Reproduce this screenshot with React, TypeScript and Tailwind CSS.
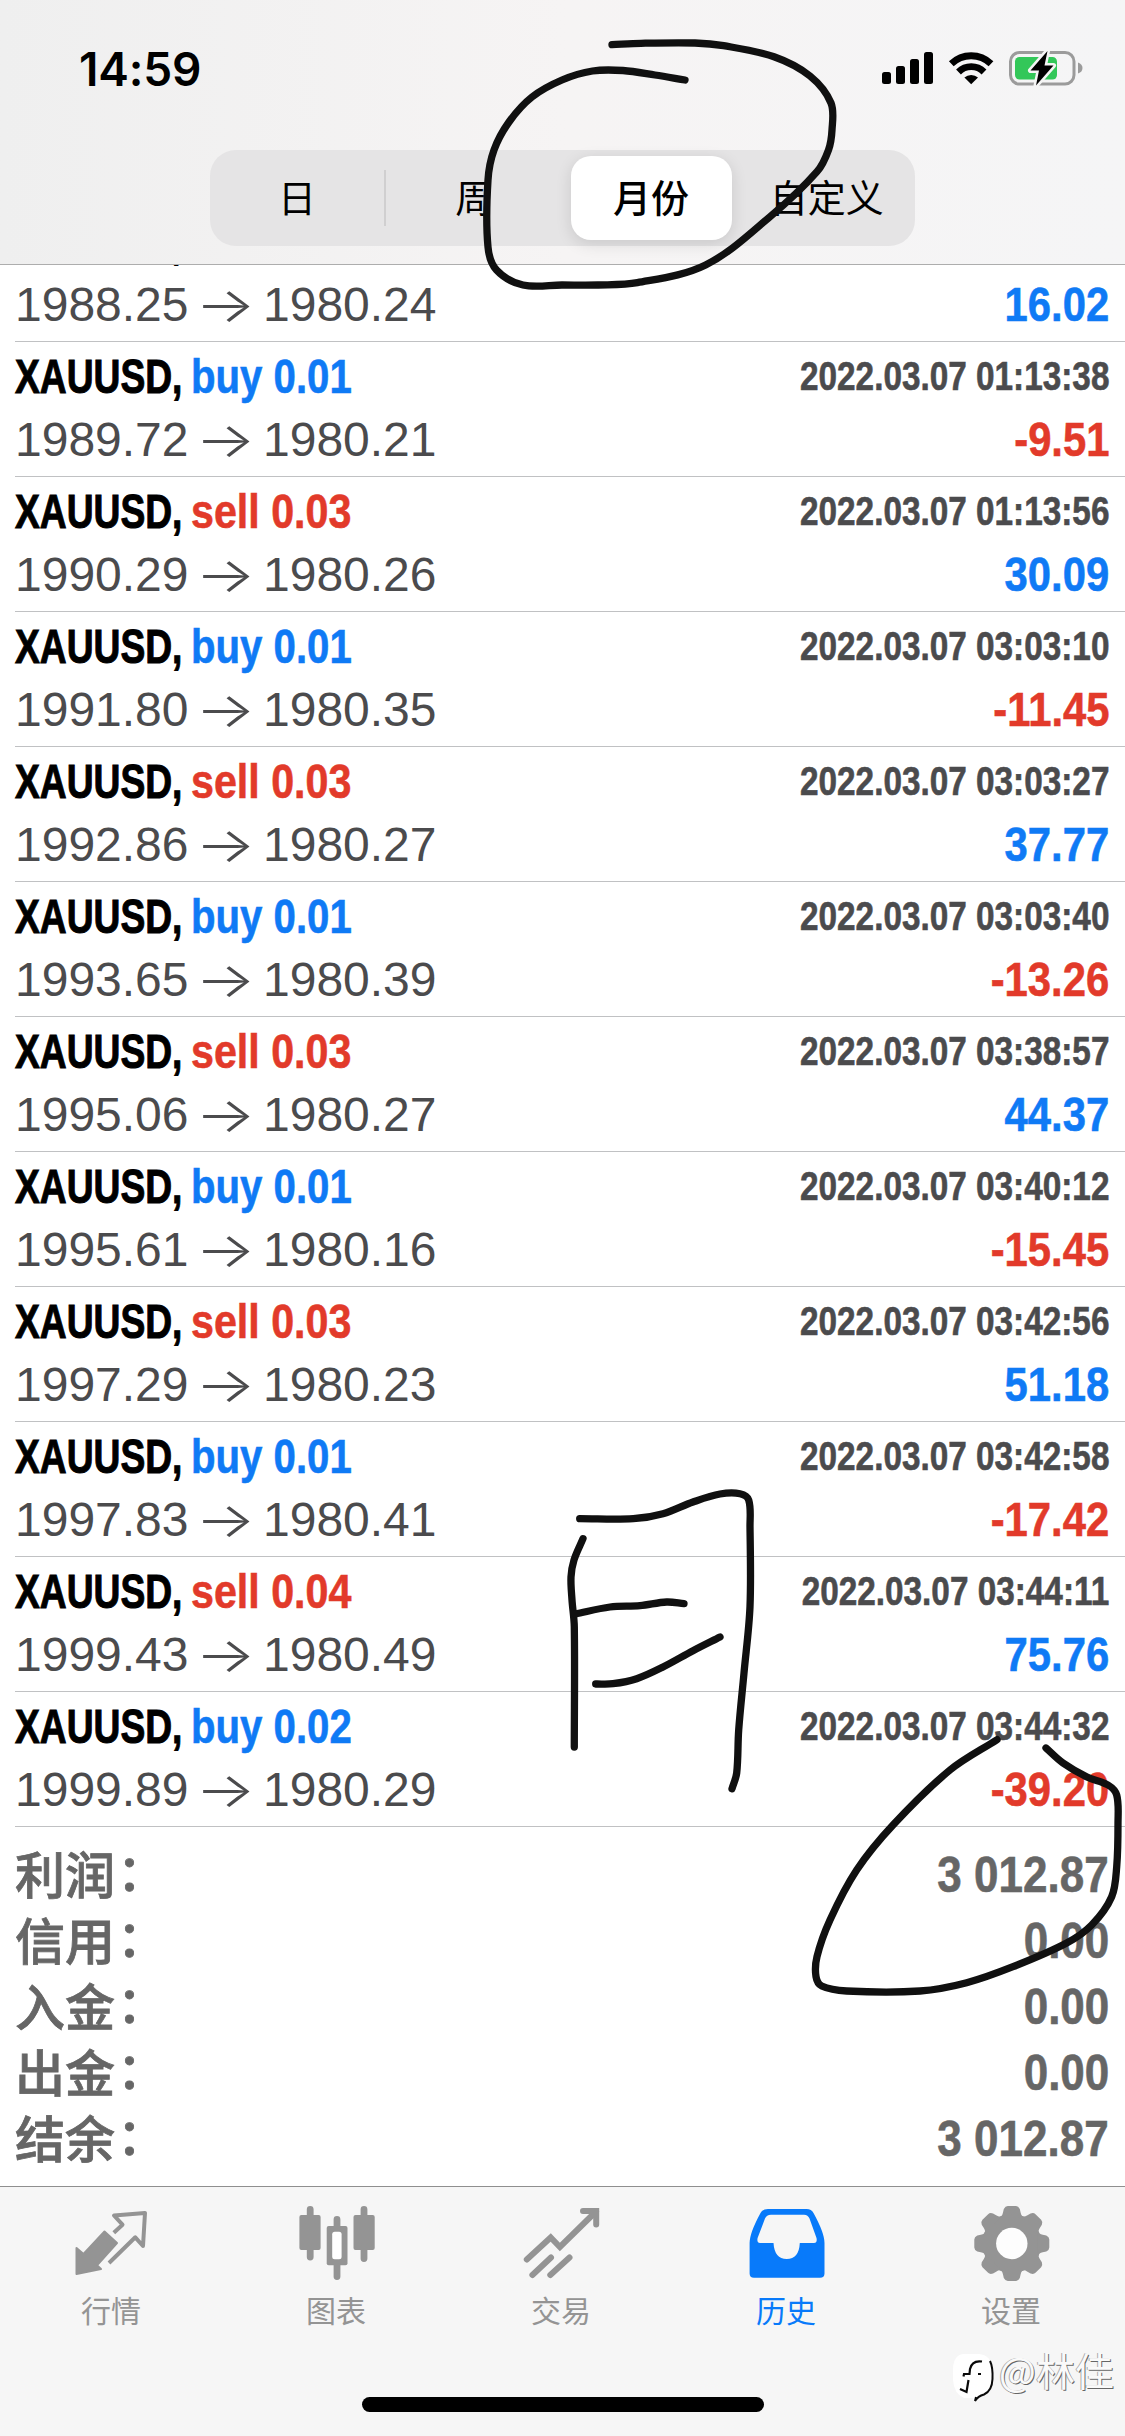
import React from 'react';

type Side = 'buy' | 'sell';
type Point = [number, number];

interface Deal {
  side: Side;
  volume: string;
  open: string;
  close: string;
  time: string;
  profit: string;
}

const deals: Deal[] = [
  { side: 'sell', volume: '0.03', open: '1988.25', close: '1980.24', time: '2022.03.07 01:13:24', profit: '16.02' },
  { side: 'buy', volume: '0.01', open: '1989.72', close: '1980.21', time: '2022.03.07 01:13:38', profit: '-9.51' },
  { side: 'sell', volume: '0.03', open: '1990.29', close: '1980.26', time: '2022.03.07 01:13:56', profit: '30.09' },
  { side: 'buy', volume: '0.01', open: '1991.80', close: '1980.35', time: '2022.03.07 03:03:10', profit: '-11.45' },
  { side: 'sell', volume: '0.03', open: '1992.86', close: '1980.27', time: '2022.03.07 03:03:27', profit: '37.77' },
  { side: 'buy', volume: '0.01', open: '1993.65', close: '1980.39', time: '2022.03.07 03:03:40', profit: '-13.26' },
  { side: 'sell', volume: '0.03', open: '1995.06', close: '1980.27', time: '2022.03.07 03:38:57', profit: '44.37' },
  { side: 'buy', volume: '0.01', open: '1995.61', close: '1980.16', time: '2022.03.07 03:40:12', profit: '-15.45' },
  { side: 'sell', volume: '0.03', open: '1997.29', close: '1980.23', time: '2022.03.07 03:42:56', profit: '51.18' },
  { side: 'buy', volume: '0.01', open: '1997.83', close: '1980.41', time: '2022.03.07 03:42:58', profit: '-17.42' },
  { side: 'sell', volume: '0.04', open: '1999.43', close: '1980.49', time: '2022.03.07 03:44:11', profit: '75.76' },
  { side: 'buy', volume: '0.02', open: '1999.89', close: '1980.29', time: '2022.03.07 03:44:32', profit: '-39.20' },
];

const totals = [
  { label: '利润', value: '3 012.87' },
  { label: '信用', value: '0.00' },
  { label: '入金', value: '0.00' },
  { label: '出金', value: '0.00' },
  { label: '结余', value: '3 012.87' },
];

const strokes: Point[][] = [
  [[612, 44.7], [641, 43.3], [695, 43], [723.6, 45.7], [774, 56.7], [810, 76], [831, 103], [832, 130], [828.5, 150], [817, 171.7], [770, 216.7], [705.6, 265], [637.4, 282.7], [598, 285], [562, 285], [523, 285], [496.5, 270], [488, 247], [488, 180], [494, 150], [509, 122], [532, 97], [562, 80], [592.5, 71], [623, 70.5], [655, 75], [685, 80]],
  [[579.7, 1518.7], [633.3, 1518.7], [663, 1513.7], [693, 1502], [720, 1494], [740, 1493.7], [748.7, 1500], [750, 1526.7], [750, 1606.7], [744, 1673], [738.7, 1730], [736.7, 1773], [732, 1788.7]],
  [[583, 1538.7], [574, 1560], [571, 1577], [572, 1600], [574.3, 1626.7], [574.3, 1747]],
  [[575.3, 1614], [610, 1607], [640, 1605.7], [666.7, 1602], [684, 1603.7]],
  [[595.7, 1684], [613, 1683.7], [636.7, 1678.7], [663, 1667], [693, 1650.7], [720, 1637]],
  [[1046, 1748], [1063, 1763], [1087, 1777], [1108, 1785], [1116.7, 1795], [1118, 1823], [1116.7, 1866.7], [1111.7, 1896.7], [1091.7, 1925], [1066.7, 1943], [1013, 1966.7], [966.7, 1982.7], [920, 1991], [846.7, 1991], [821.7, 1986], [816, 1976.7], [817, 1956.7], [830, 1920], [856.7, 1870], [893, 1825], [950, 1770], [997, 1739.7]],
];

// Catmull-Rom with the handles capped to the segment length
function smoothPath(points: Point[]) {
  let d = `M${points[0][0]} ${points[0][1]}`;
  for (let i = 0; i < points.length - 1; i++) {
    const p0 = points[i - 1] ?? points[i];
    const p1 = points[i];
    const p2 = points[i + 1];
    const p3 = points[i + 2] ?? p2;
    const len = Math.hypot(p2[0] - p1[0], p2[1] - p1[1]) / 3;
    const t1 = Math.hypot(p2[0] - p0[0], p2[1] - p0[1]) || 1;
    const t2 = Math.hypot(p3[0] - p1[0], p3[1] - p1[1]) || 1;
    const c1 = [p1[0] + ((p2[0] - p0[0]) / t1) * len, p1[1] + ((p2[1] - p0[1]) / t1) * len];
    const c2 = [p2[0] - ((p3[0] - p1[0]) / t2) * len, p2[1] - ((p3[1] - p1[1]) / t2) * len];
    d += ` C${c1[0]} ${c1[1]} ${c2[0]} ${c2[1]} ${p2[0]} ${p2[1]}`;
  }
  return d;
}

function StatusIcons() {
  return (
    <svg className="h-[40px] w-[204px]" viewBox="880 50 204 40">
      <rect x="882" y="73" width="9" height="12" rx="2.5" />
      <rect x="896" y="67" width="9" height="18" rx="2.5" />
      <rect x="910" y="60" width="9" height="25" rx="2.5" />
      <rect x="924" y="53" width="9" height="32" rx="2.5" />
      <g fill="none" stroke="#000" strokeWidth="6.8">
        <path d="M951.3 64.8 A28.5 28.5 0 0 1 991 64.8" />
        <path d="M958.5 73 A18 18 0 0 1 984 73" />
      </g>
      <path d="M971.2 85.2 l-6.8 -6.6 a10 10 0 0 1 13.6 0 z" />
      <rect x="1010.5" y="53.5" width="63.5" height="31.5" rx="9" fill="none" stroke="#9b9b9b" strokeWidth="3" />
      <path d="M1078 63.5 q4.5 1.5 4.5 5.5 t-4.5 5.5z" fill="#9b9b9b" />
      <rect x="1015" y="58" width="42" height="22.5" rx="4.5" fill="#33c759" />
      <path
        d="M1047.5 52 L1030.5 71.5 H1039 L1036 86.5 L1053.5 66.5 H1044.5 Z"
        stroke="#f5f5f5"
        strokeWidth="5"
        paintOrder="stroke"
        strokeLinejoin="round"
      />
    </svg>
  );
}

function Header() {
  return (
    <header className="relative z-10 flex h-[265px] shrink-0 flex-col border-b border-[#adadad] bg-linear-to-r from-[#efefef] via-[#f6f4f4] to-[#f5f5f6]">
      <div className="flex h-[150px] items-start justify-between pt-[49px] pr-[41px] pl-[79px]">
        <div className="font-['Inter',sans-serif] text-[46px] leading-[40px] font-semibold tracking-[-0.2px]">14:59</div>
        <StatusIcons />
      </div>
      <div className="mx-auto flex h-24 w-[705px] rounded-[26px] bg-[#e5e4e5] text-[38px] leading-none">
        <div className="my-5 flex w-1/4 items-center justify-center border-r-2 border-[#d0cfd0] pb-1">日</div>
        <div className="flex w-1/4 items-center justify-center pb-1">周</div>
        <div className="flex w-1/4 py-[6px] pr-[7px] pl-2">
          <div className="flex flex-1 items-center justify-center rounded-[20px] bg-white pb-1 font-medium shadow-[0_4px_16px_rgba(0,0,0,0.12)]">
            月份
          </div>
        </div>
        <div className="flex w-1/4 items-center justify-center pb-1">自定义</div>
      </div>
    </header>
  );
}

const sideStyles: Record<Side, string> = {
  buy: 'origin-left scale-x-[0.837] text-[#0f7af5]',
  sell: 'origin-left scale-x-[0.858] text-[#e23a2a]',
};

function DealRow({ deal }: { deal: Deal }) {
  return (
    <div className="ml-[15px] h-[135px] border-b border-[#c0c1c3] pt-[3px] pr-4 font-['Liberation_Sans',sans-serif] whitespace-nowrap">
      <div className="flex h-[63px] items-center justify-between leading-[63px] font-bold [-webkit-text-stroke:0.6px]">
        <div className="flex text-[48px]">
          <span className="w-[176px]">
            <span className="inline-block origin-left scale-x-[0.775] [-webkit-text-stroke:1px]">XAUUSD,</span>
          </span>
          <span className={sideStyles[deal.side]}>
            {deal.side} {deal.volume}
          </span>
        </div>
        <div className="origin-right scale-x-[0.833] text-[40px] text-[#4b4b4d]">{deal.time}</div>
      </div>
      <div className="flex h-[63px] items-center justify-between leading-[63px]">
        <div className="flex text-[48px] text-[#4b4b4d]">
          <span className="w-[173px]">{deal.open}</span>
          <span className="w-[75px] scale-x-[1.32] text-center font-['Inter',sans-serif] font-light">→</span>
          <span>{deal.close}</span>
        </div>
        <div
          className={`origin-right scale-x-[0.87] text-[48px] font-bold [-webkit-text-stroke:0.6px] ${
            deal.profit.startsWith('-') ? 'text-[#e23a2a]' : 'text-[#0f7af5]'
          }`}
        >
          {deal.profit}
        </div>
      </div>
    </div>
  );
}

function QuotesIcon() {
  return (
    <svg className="size-[90px]" viewBox="0 0 90 90">
      <path d="M8.5 48 L15.5 54 L36.5 31.5 L49 43 L29 65.3 L33 69 L8.5 74 Z" fill="#949494" stroke="#949494" strokeWidth="2" strokeLinejoin="round" />
      <path d="M45.8 32.7 L54.5 24.7 L46 15.5 L77 13 L75 46 L67.3 37.3 L41 63" fill="none" stroke="#949494" strokeWidth="4" strokeLinejoin="round" />
    </svg>
  );
}

function ChartIcon() {
  return (
    <svg className="size-[90px]" viewBox="0 0 90 90" fill="#949494">
      <path d="M17.2 9.5V57M44 19.5V76.5M71 9.5V58.5" stroke="#949494" strokeWidth="6.8" strokeLinecap="round" />
      <rect x="6.4" y="15" width="21.2" height="35" rx="2" />
      <rect x="60.5" y="15" width="21.2" height="35" rx="2" />
      <rect x="33.7" y="26" width="20.8" height="39.3" rx="2" />
      <rect x="39.2" y="31.7" width="9.4" height="27.6" rx="2.5" fill="#fff" />
    </svg>
  );
}

function TradeIcon() {
  return (
    <svg className="size-[90px]" viewBox="0 0 90 90" fill="none" stroke="#949494" strokeWidth="6" strokeLinecap="round">
      <path d="M8.8 59.5 L32.7 37.5 L41.9 47 L78 11.5" />
      <path d="M65 11 H78.2 V24.5" />
      <path d="M14.4 75 L33 57.5 M32.3 75 L51.5 57.5" />
    </svg>
  );
}

function HistoryIcon() {
  return (
    <svg className="size-[90px]" viewBox="0 0 90 90">
      <path d="M25 9 H63.5 Q68.5 9 70.5 13 Q81.5 33 81.5 43 V73.5 Q81.5 77.7 77 77.7 H11 Q6.6 77.7 6.6 73.5 V43 Q6.6 33 17.5 13 Q19.5 9 25 9Z" fill="#087afa" />
      <path d="M28 14.7 H61 Q65 14.7 66.5 18.5 L73.5 38 Q74.5 43 71 43 H56.8 Q56 59 43.7 59 Q31.5 59 30.5 43 H17 Q13.6 43 14.6 38 L22 18.5 Q23.5 14.7 28 14.7Z" fill="#f6f6f6" />
    </svg>
  );
}

function SettingsIcon() {
  return (
    <svg className="size-[90px]" viewBox="-43.8 -43.5 90 90" fill="#949494">
      <circle r="29.5" />
      {[0, 45, 90, 135, 180, 225, 270, 315].map((angle) => (
        <path key={angle} d="M-12.5 -26 Q-9.5 -27 -8.8 -31 L-8 -34.5 Q-6.5 -37.5 -4 -37.5 H4 Q6.5 -37.5 8 -34.5 L8.8 -31 Q9.5 -27 12.5 -26Z" transform={`rotate(${angle})`} />
      ))}
      <circle r="15.7" fill="#fdfdfd" />
    </svg>
  );
}

const tabs = [
  { label: '行情', icon: <QuotesIcon /> },
  { label: '图表', icon: <ChartIcon /> },
  { label: '交易', icon: <TradeIcon /> },
  { label: '历史', icon: <HistoryIcon />, active: true },
  { label: '设置', icon: <SettingsIcon /> },
];

function TabBar() {
  return (
    <footer className="relative flex h-[250px] shrink-0 flex-col items-center border-t border-[#8f8f8f] bg-[#f6f6f6]">
      <nav className="flex w-full pt-[13px]">
        {tabs.map((tab) => (
          <div
            key={tab.label}
            className={`flex flex-1 flex-col items-center text-[30px] leading-[44px] ${tab.active ? 'text-[#087afa]' : 'text-[#949494]'}`}
          >
            {tab.icon}
            <span className="-mt-[3px] pr-[3px]">{tab.label}</span>
          </div>
        ))}
      </nav>
      <div className="mt-auto mb-6 h-[15px] w-[402px] rounded-full bg-black" />
      <div className="absolute right-[11px] bottom-[34px] flex items-center gap-1">
        <svg className="h-[52px] w-[44px]" viewBox="0 0 44 52">
          <path d="M12 4 H28 Q40 5 41 18 V30 Q41 42 31 46 L23 51 L22 48 H13 Q3 44 2 30 V18 Q3 5 12 4Z" fill="#fff" />
          <path d="M39 11 Q42 17 41.5 29 Q41 41 33 44.5 Q27 46 24 51 L25 47" fill="none" stroke="#0a0a0a" strokeWidth="2" />
          <path d="M31 11.5 Q21 10 19 19 L18.5 24 H13 L12.5 26.5 M17.5 30 L15.5 42 L9 39 M27 24 H30" fill="none" stroke="#0a0a0a" strokeWidth="2.2" />
        </svg>
        <span className="-mt-3.5 text-[39px] leading-[48px] text-[#fafafa] [text-shadow:1px_1px_0_#666,-1px_0_0_#aaa]">@林佳</span>
      </div>
    </footer>
  );
}

export default function App() {
  return (
    <div className="relative flex h-[2436px] w-[1125px] flex-col overflow-hidden bg-white font-['Noto_Sans_CJK_SC',sans-serif] text-black">
      <Header />
      <main className="-mt-[58px] flex-1">
        {deals.map((deal) => (
          <DealRow key={deal.open} deal={deal} />
        ))}
        <div className="pt-[15px] pr-4 pl-[15px] text-[#666]">
          {totals.map((row) => (
            <div key={row.label} className="flex h-[66px] items-center justify-between text-[50px] leading-[66px]">
              <span className="-mt-1.5 font-medium [-webkit-text-stroke:0.8px]">
                {row.label}
                <span className="relative -top-[3px] left-0.5">：</span>
              </span>
              <span className="origin-right scale-x-[0.88] font-['Liberation_Sans',sans-serif] font-bold [-webkit-text-stroke:0.6px]">
                {row.value}
              </span>
            </div>
          ))}
        </div>
      </main>
      <TabBar />
      <svg
        className="pointer-events-none absolute inset-0 z-20 h-full w-full"
        viewBox="0 0 1125 2436"
        fill="none"
        stroke="#101010"
        strokeWidth="7.3"
        strokeLinecap="round"
        strokeLinejoin="round"
      >
        {strokes.map((points, i) => (
          <path key={i} d={smoothPath(points)} />
        ))}
      </svg>
    </div>
  );
}
